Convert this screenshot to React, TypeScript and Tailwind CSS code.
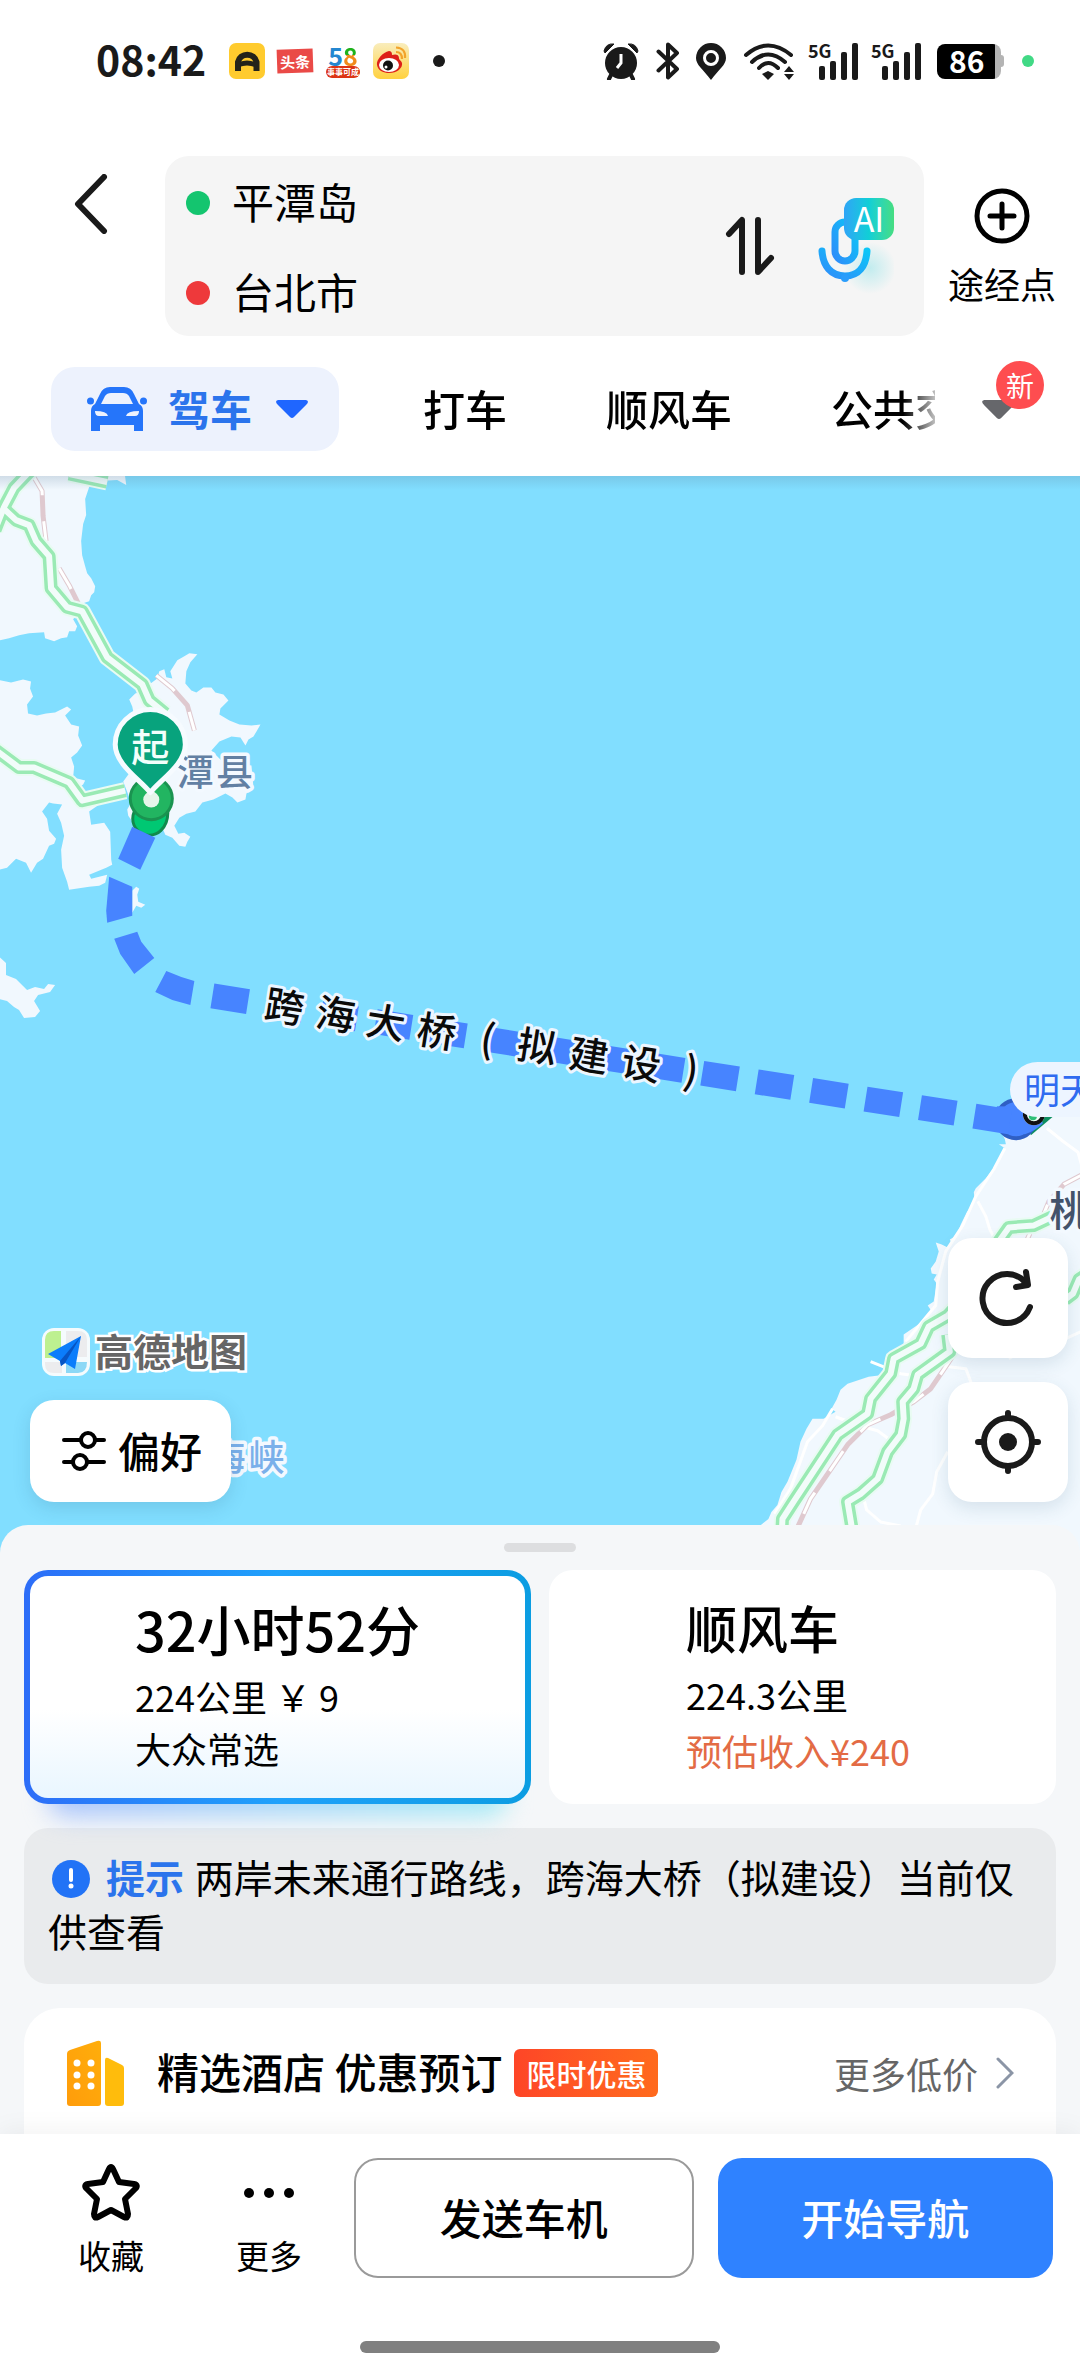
import React from "react";

const LAND = "#f1f8fe";
const INK = "#1a1a1a";

type Point = [number, number];

const roads: string[] = [
  "32,470 15,488 5,507 -4,530",
  "3,507 17,520 30,525 37,541 50,556 52,588 68,607 83,611 108,657 143,684 150,700 166,713",
  "-4,749 20,767 35,767 70,782 83,800 126,790",
  "70,474 108,482",
  "1068,1211 1050,1216 1033,1224 1008,1226 998,1240 990,1262 960,1300 947,1314 928,1325 920,1342 893,1357 890,1372 870,1397 867,1412 837,1433 793,1500 782,1517 780,1560",
  "947,1333 949,1350 917,1373 913,1387 902,1400 903,1417 900,1433 887,1450 877,1477 860,1492 847,1500 852,1530 852,1560",
  "1064,1298 1072,1292 1078,1278 1090,1270",
];

const rails: string[] = [
  "33,474 43,491 44,516 47,541",
  "60,568 70,585 79,603",
  "157,675 173,688 188,705 195,730",
  "1084,1172 1063,1183 1048,1200 1043,1212",
  "1029,1232 1020,1252",
  "953,1353 945,1365 930,1387 913,1400 890,1413 867,1423 847,1443 810,1497 795,1530",
];

const lanes: string[] = [
  "1004,1147 993,1168 975,1195 962,1224 945,1250 937,1280 935,1304 905,1340",
  "1046,1127 1062,1140 1077,1151 1084,1176",
  "977,1200 985,1215 989,1228 995,1240",
  "870,1360 900,1372 915,1374 940,1366",
  "832,1407 822,1424 807,1440 790,1487 774,1512",
  "835,1415 862,1425 877,1429 892,1440 895,1450",
  "947,1450 936,1470 932,1492 920,1508 914,1530",
  "862,1492 866,1508 880,1520 900,1524",
  "940,1364 965,1367 970,1380 969,1395",
  "1008,1357 1040,1336 1058,1340 1080,1330",
];

const land: string[] = [
  "-4,470 125,470 127,485 118,480 100,481 91,484 86,499 87,515 84,524 82,541 83,555 86,566 88,573 92,578 96,586 95,592 92,595 90,601 84,603 80,612 74,619 78,626 76,631 70,631 68,637 62,638 55,641 46,638 45,632 30,633 20,635 10,638 -4,641",
  "-4,679 12,682 24,679 32,681 31,688 34,696 28,704 29,713 38,715 47,713 56,712 68,706 72,709 66,715 72,724 80,726 79,735 83,745 78,752 72,757 75,766 74,777 86,780 84,784 78,788 83,799 100,804 90,811 92,824 105,822 111,831 112,859 113,864 107,867 90,874 92,878 108,874 106,882 100,885 90,886 70,889 68,881 63,867 62,849 65,835 62,822 58,813 63,804 54,803 50,802 43,811 48,818 50,830 57,838 55,843 50,845 44,858 38,862 32,872 27,862 17,858 8,867 -4,870",
  "-4,952 7,962 7,974 17,978 28,989 36,986 45,988 49,983 56,984 51,991 39,994 35,1000 41,1010 36,1016 25,1017 20,1009 15,1006 8,1000 -4,997",
  "150,684 158,678 160,671 165,669 167,677 173,678 171,671 178,660 185,656 190,653 198,654 191,662 187,671 186,683 192,690 197,692 204,687 212,687 216,692 224,694 229,700 221,708 220,714 230,720 240,724 252,725 261,724 257,731 254,736 249,739 246,745 241,737 232,736 220,741 212,750 222,760 252,765 254,787 247,793 246,799 238,802 233,797 226,793 214,799 203,802 196,811 187,813 180,817 175,825 179,833 185,832 191,836 188,841 186,846 180,845 173,837 166,834 160,820 134,822 129,815 128,809 132,802 124,781 135,766 140,740 133,706 130,699 136,693 143,691",
  "133,890 137,886 140,888 138,894 139,901 146,904 142,907 137,905 133,912",
  "1000,1130 1004,1138 1005,1143 998,1143 1004,1147 993,1167 985,1177 975,1187 973,1191 974,1200 966,1211 960,1223 956,1234 949,1238 951,1242 947,1246 941,1243 935,1241 938,1250 935,1260 930,1267 931,1272 936,1273 933,1278 936,1282 933,1300 927,1304 931,1310 922,1320 903,1333 903,1342 890,1353 884,1373 868,1375 847,1382 840,1388 836,1398 831,1407 835,1410 823,1417 812,1417 806,1427 800,1440 796,1458 787,1480 781,1490 777,1503 771,1510 768,1517 758,1525 740,1560 1090,1560 1090,1100",
];

const bridgeLabel: { ch: string; x: number; y: number }[] = [
  { ch: "跨", x: 285, y: 1006 },
  { ch: "海", x: 336, y: 1014 },
  { ch: "大", x: 386, y: 1022 },
  { ch: "桥", x: 437, y: 1031 },
  { ch: "(", x: 488, y: 1038 },
  { ch: "拟", x: 537, y: 1046 },
  { ch: "建", x: 589, y: 1055 },
  { ch: "设", x: 641, y: 1063 },
  { ch: ")", x: 691, y: 1070 },
];

const dashes: Point[][] = [
  [[133, 826], [156, 837], [141, 869], [119, 858]],
  [[110, 876], [133, 886], [133, 915], [108, 922], [107, 910]],
  [[115, 938], [138, 931], [142, 941], [155, 957], [135, 973], [121, 953]],
  [[167, 970], [182, 976], [195, 980], [191, 1004], [173, 999], [156, 991]],
];

function MapCanvas() {
  return (
    <svg
      className="absolute inset-0 h-full w-full"
      viewBox="0 476 1080 1075"
      preserveAspectRatio="xMidYMin slice"
      role="img"
      aria-label="平潭岛到台北市路线地图"
    >
      <defs>
        <linearGradient id="edge" x1="0" y1="0" x2="0" y2="1">
          <stop offset="0" stopColor="#5b7c99" stopOpacity="0.22" />
          <stop offset="1" stopColor="#5b7c99" stopOpacity="0" />
        </linearGradient>
      </defs>
      <rect x="0" y="476" width="1080" height="1100" fill="#81deff" />
      {land.map((p) => (
        <polygon key={p} points={p} fill={LAND} />
      ))}
      <g fill="none" strokeLinejoin="round">
        {lanes.map((p) => (
          <polyline key={p} points={p} stroke="#ffffff" strokeWidth="3" />
        ))}
        {rails.map((p) => (
          <g key={p}>
            <polyline points={p} stroke="#dfc9cf" strokeWidth="5" />
            <polyline points={p} stroke="#ffffff" strokeWidth="3" strokeDasharray="24 26" />
          </g>
        ))}
        {roads.map((p) => (
          <polyline key={p} points={p} stroke="#e9fbf3" strokeWidth="17" />
        ))}
        {roads.map((p) => (
          <polyline key={p} points={p} stroke="#9aeab4" strokeWidth="13" />
        ))}
        {roads.map((p) => (
          <polyline key={p} points={p} stroke="#f2fcfa" strokeWidth="6" />
        ))}
      </g>

      <g className="font-medium" stroke="#f3f9ff" strokeWidth="7" strokeLinejoin="round" paintOrder="stroke" textAnchor="middle">
        <text x="196" y="785" fontSize="37" fill="#6280a3">潭</text>
        <text x="235" y="785" fontSize="37" fill="#6280a3">县</text>
        <text x="228" y="1469" fontSize="36" fill="#7ab0ea">海</text>
        <text x="267" y="1469" fontSize="36" fill="#7ab0ea">峡</text>
        <text x="1069" y="1225" fontSize="41" fill="#43536b">桃</text>
      </g>

      <path d="M152 802V812Q152 816 150 818" stroke="#118a4c" strokeWidth="36" strokeLinecap="round" fill="none" />
      <path d="M152 802V812Q152 816 150 818" stroke="#00c873" strokeWidth="30" strokeLinecap="round" fill="none" />
      <g fill="#4784ff">
        {dashes.map((d) => (
          <polygon key={d.join(" ")} points={d.map((q) => q.join(",")).join(" ")} />
        ))}
      </g>
      <circle cx="152" cy="798" r="21" fill="#22b561" stroke="#1a9350" strokeWidth="3" />
      <circle cx="152" cy="799" r="8" fill="#e6f5ea" />
      <path
        d="M151 792C142 780 116 764 116 744a35 35 0 0 1 70 0C186 764 160 780 151 792Z"
        fill="#08a37d"
        stroke="#f6fbff"
        strokeWidth="5"
        strokeLinejoin="round"
      />
      <text x="151" y="760" fontSize="38" className="font-medium" fill="#f2fffb" textAnchor="middle">起</text>

      <polygon points="1020,1108 1056,1112 1030,1134" fill="#0d8f60" />
      <circle cx="1015" cy="1118" r="19" fill="#4784ff" stroke="#2f5fc4" strokeWidth="4" />
      <path d="M996 1105L1034 1106 1042 1122Q1034 1130 1024 1133L996 1129Z" fill="#4784ff" />
      <line x1="213" y1="995" x2="1018" y2="1122" stroke="#4784ff" strokeWidth="25" strokeDasharray="36 19" />
      <circle cx="1033" cy="1113" r="11" fill="#f0fff6" />
      <circle cx="1033" cy="1113" r="9" fill="#f0fff6" stroke="#111111" strokeWidth="4" />
      <circle cx="1032" cy="1115" r="4" fill="#2fbf78" />

      <g className="font-medium" fontSize="39" fill="#0a0a0a" stroke="#ecf6ff" strokeWidth="6" strokeLinejoin="round" paintOrder="stroke" textAnchor="middle">
        {bridgeLabel.map((c) => (
          <text key={c.ch} x={c.x} y={c.y + 14} transform={`rotate(9 ${c.x} ${c.y})`}>
            {c.ch}
          </text>
        ))}
      </g>
      <rect x="0" y="476" width="1080" height="14" fill="url(#edge)" />
    </svg>
  );
}

function StatusBar() {
  return (
    <div className="flex h-[122px] items-center pr-[46px] pl-[96px] text-[#1a1a1a]">
      <span className="w-[109px] pb-1.5 text-[41px] leading-none font-bold">08:42</span>
      <div className="ml-[24px] flex items-center gap-3">
        <svg className="size-9" viewBox="0 0 36 36" aria-hidden="true">
          <rect width="36" height="36" rx="7" fill="#ffcb2e" />
          <path d="M9 28V19A9.500 9.500 0 0 1 27.500 19V28" fill="none" stroke="#24231a" strokeWidth="6" />
          <path d="M10 19Q18 16 26 19V24Q18 21 10 24Z" fill="#24231a" />
        </svg>
        <span className="flex h-6 w-9 -rotate-2 items-center justify-center bg-[#ea4a47] text-[15px] leading-none font-bold text-white">头条</span>
        <span className="flex w-9 flex-col items-center">
          <span className="flex text-[25px] leading-[22px] font-bold">
            <span className="text-[#2487d0]">5</span>
            <span className="bg-linear-to-b from-[#1eb21c] from-50% to-[#f18b1b] to-50% bg-clip-text text-transparent">8</span>
          </span>
          <span className="rounded-full bg-[#dc3414] px-px text-[8px] leading-3 font-bold text-white">事事可成</span>
        </span>
        <svg className="size-9" viewBox="0 0 36 36" aria-hidden="true">
          <defs>
            <linearGradient id="wb" x1="0" y1="0" x2="0" y2="1">
              <stop offset="0" stopColor="#f9edbd" />
              <stop offset="1" stopColor="#ffd13f" />
            </linearGradient>
          </defs>
          <rect width="36" height="36" rx="7" fill="url(#wb)" />
          <path d="M16 8C10 9 3 17 4 22C5 28 11 30 16 30C24 30 30 25 29 20C28 17 26 17 26 15C26 11 22 11 19 12C19 9 18 8 16 8Z" fill="#dd2019" />
          <ellipse cx="16" cy="22" rx="10" ry="7" fill="#ffffff" />
          <circle cx="15" cy="22.500" r="5" fill="#111111" />
          <circle cx="13" cy="24" r="1.500" fill="#ffffff" />
          <path d="M23 9Q29 9 29 16M23 4.500Q33 5 32 15" fill="none" stroke="#f2a32b" strokeWidth="2.200" />
        </svg>
      </div>
      <span className="ml-6 size-3 rounded-full bg-[#1a1a1a]" />

      <div className="ml-auto flex items-center">
        <svg className="h-[38px] w-[38px]" viewBox="0 0 38 38" fill={INK} aria-hidden="true">
          <circle cx="19" cy="21" r="16" />
          <path d="M2 9Q4 1 12 2L3 11ZM36 9Q34 1 26 2L35 11Z" stroke={INK} strokeLinejoin="round" />
          <path d="M9 33L7 37M29 33L31 37" stroke={INK} strokeWidth="4" strokeLinecap="round" />
          <path d="M19 12V21L15 26" fill="none" stroke="#ffffff" strokeWidth="3" />
        </svg>
        <svg className="ml-4 h-[38px] w-6" viewBox="0 0 24 38" fill="none" stroke={INK} strokeWidth="4" strokeLinejoin="round" strokeLinecap="round" aria-hidden="true">
          <path d="M2.500 9.500L21 27L12 35.500V2.500L21 11L2.500 28.500" />
        </svg>
        <svg className="ml-[15px] h-[38px] w-8" viewBox="0 0 32 38" aria-hidden="true">
          <path d="M16 1A15 15 0 0 0 1 16C1 23 8 27 16 38C24 27 31 23 31 16A15 15 0 0 0 16 1Z" fill={INK} />
          <circle cx="16" cy="16" r="6.500" fill={INK} stroke="#ffffff" strokeWidth="3" />
        </svg>
        <svg className="ml-4 h-[38px] w-[52px]" viewBox="0 0 52 38" fill="none" stroke={INK} strokeWidth="4" strokeLinecap="round" aria-hidden="true">
          <path d="M3 13Q25 -6 48 13M9 20Q25 5 42 20M16 26Q25 16 35 26" />
          <path d="M25 29L31 32L25 38L19 32Z" fill={INK} stroke="none" />
          <path d="M41 30L46 24L51 30ZM41 32L46 38L51 32Z" fill={INK} stroke="none" />
        </svg>
        {[0, 1].map((n) => (
          <div key={n} className="relative ml-3 flex h-[38px] w-[51px] items-end justify-end gap-[5px]">
            <span className="absolute top-0 left-px text-[18px] leading-4 font-bold">5G</span>
            <span className="h-[14px] w-[6px] rounded-xs bg-[#1a1a1a]" />
            <span className="h-[19px] w-[6px] rounded-xs bg-[#1a1a1a]" />
            <span className="h-7 w-[6px] rounded-xs bg-[#1a1a1a]" />
            <span className="h-[37px] w-[6px] rounded-xs bg-[#1a1a1a]" />
          </div>
        ))}
        <span className="ml-4 flex h-[35px] w-16 items-center rounded-lg bg-linear-to-r from-black from-90% to-[#b4b4b4] to-90% pb-[2px] pl-3 text-[30px] leading-none font-bold text-white">
          86
        </span>
        <span className="h-3 w-[3px] rounded-r-full bg-[#b4b4b4]" />
        <span className="ml-[18px] size-3 rounded-full bg-[#41d985]" />
      </div>
    </div>
  );
}

function SearchRow() {
  return (
    <div className="mt-[34px] flex">
      <button aria-label="返回" className="flex w-[165px] items-start self-start pt-[18px] pl-[74px]">
        <svg className="h-[60px] w-[34px]" viewBox="0 0 34 60" fill="none" stroke={INK} strokeWidth="6" strokeLinecap="round" strokeLinejoin="round">
          <path d="M30 3L4 30L30 57" />
        </svg>
      </button>
      <div className="flex min-w-0 flex-1 items-center rounded-3xl bg-[#f5f5f5] pr-[30px] pl-[21px]">
        <div className="min-w-0 flex-1">
          <label className="flex h-[90px] items-center gap-[22px] pt-1">
            <span className="size-6 rounded-full bg-[#14c56f]" />
            <input aria-label="起点" defaultValue="平潭岛" className="min-w-0 flex-1 bg-transparent pb-1 text-[42px] leading-[60px] text-black outline-none" />
          </label>
          <label className="flex h-[90px] items-center gap-[22px] pt-1">
            <span className="size-6 rounded-full bg-[#ee393b]" />
            <input aria-label="终点" defaultValue="台北市" className="min-w-0 flex-1 bg-transparent pb-1 text-[42px] leading-[60px] text-black outline-none" />
          </label>
        </div>
        <button aria-label="交换起终点">
          <svg className="h-[60px] w-[50px]" viewBox="0 0 50 60" fill="none" stroke={INK} strokeWidth="6" strokeLinecap="round" strokeLinejoin="round">
            <path d="M4 18L17 4V56M33 4V56L46 42" />
          </svg>
        </button>
        <button aria-label="AI 语音" className="relative ml-[43px] h-[96px] w-[76px]">
          <svg className="h-[96px] w-[76px]" viewBox="0 0 76 96" fill="none" aria-hidden="true">
            <defs>
              <linearGradient id="mic" x1="0" y1="1" x2="1" y2="0">
                <stop offset="0" stopColor="#2f8dfa" />
                <stop offset="1" stopColor="#0cc6f7" />
              </linearGradient>
              <radialGradient id="glow">
                <stop offset="0" stopColor="#9fe6ea" stopOpacity="0.6" />
                <stop offset="1" stopColor="#9fe6ea" stopOpacity="0" />
              </radialGradient>
            </defs>
            <circle cx="52" cy="70" r="26" fill="url(#glow)" />
            <rect x="17" y="24" width="20" height="39" rx="10" stroke="url(#mic)" strokeWidth="7" />
            <path d="M4 53C5 68 13 78 27 78S48 68 49 53" stroke="url(#mic)" strokeWidth="7" strokeLinecap="round" />
            <circle cx="27" cy="80" r="4" fill="#2b9dfb" />
          </svg>
          <span className="absolute top-0 right-0 flex h-[42px] w-[50px] items-center justify-center rounded-xl bg-linear-to-r from-[#2fa4f6] via-[#10cfd6] to-[#46dd80] pb-0.5 text-[34px] leading-none text-white">
            AI
          </span>
        </button>
      </div>
      <button className="flex w-[156px] flex-col items-center justify-center gap-5 pb-0.5">
        <svg className="size-14" viewBox="0 0 56 56" fill="none" stroke="#000000" strokeWidth="5" strokeLinecap="round" aria-hidden="true">
          <circle cx="28" cy="28" r="25" />
          <path d="M28 16V40M16 28H40" />
        </svg>
        <span className="text-[36px] leading-[38px] text-black">途经点</span>
      </button>
    </div>
  );
}

function ModeTabs() {
  return (
    <nav className="mt-[31px] flex items-center pb-[25px] pl-[51px] text-[42px] leading-none font-medium text-black">
      <button className="flex h-[84px] w-[288px] shrink-0 items-center rounded-3xl bg-[#edf2fd] pl-9 text-[#2b74ec]">
        <svg className="h-[44px] w-[60px]" viewBox="0 0 60 44" fill="#2575fa" aria-hidden="true">
          <path
            fillRule="evenodd"
            d="M4 44V24Q4 19 8 17L13 7Q16 0 23 0H37Q44 0 47 7L52 17Q56 19 56 24V44H47V38H13V44ZM14 17H46L42 9Q40 6 36 6H24Q20 6 18 9ZM8 24Q8 29 12 29H21Q20 24 8 24ZM52 24Q52 29 48 29H39Q40 24 52 24Z"
          />
          <circle cx="3.500" cy="14" r="3.500" />
          <circle cx="56.500" cy="14" r="3.500" />
        </svg>
        <span className="ml-[21px] pb-0.5 font-bold">驾车</span>
        <svg className="ml-6 h-[18px] w-8" viewBox="0 0 32 18" fill="#1f66ff" aria-hidden="true">
          <path d="M2 0H30Q34 1 30 5L18 17Q16 19 14 17L2 5Q-2 1 2 0Z" />
        </svg>
      </button>
      <div className="ml-[84px] flex h-[84px] min-w-0 flex-1 items-center gap-[99px] overflow-hidden pb-0.5 leading-[60px] [mask-image:linear-gradient(to_right,black_calc(100%-32px),rgb(0_0_0/0.25))]">
        <button className="shrink-0">打车</button>
        <button className="shrink-0">顺风车</button>
        <button className="shrink-0">公共交通</button>
      </div>
      <button aria-label="更多出行方式" className="relative flex h-[84px] w-[145px] shrink-0 items-center justify-center pr-[18px]">
        <svg className="h-[19px] w-[34px]" viewBox="0 0 32 18" fill="#66676b" aria-hidden="true">
          <path d="M2 0H30Q34 1 30 5L18 17Q16 19 14 17L2 5Q-2 1 2 0Z" />
        </svg>
        <span className="absolute -top-[6px] right-9 flex size-12 items-center justify-center rounded-full bg-[#fe4d50] text-[28px] leading-none font-normal text-white">新</span>
      </button>
    </nav>
  );
}

function MapSection() {
  return (
    <section className="relative flex min-h-[1075px] flex-1 items-end overflow-hidden bg-[#81deff]">
      <MapCanvas />
      <span className="absolute top-[586px] left-[1010px] flex h-[55px] items-center rounded-l-full bg-[#edf5ff] pb-1 pl-[14px] text-[36px] leading-none whitespace-nowrap text-[#2f6bf0]">
        明天
      </span>
      <div className="relative flex w-full items-end justify-between pr-3 pb-[51px] pl-[30px]">
        <div className="flex flex-col items-start gap-6">
          <div className="ml-3 flex items-center gap-[5px]">
            <svg className="size-12" viewBox="0 0 48 48" aria-hidden="true">
              <rect width="48" height="48" rx="12" fill="#f5fbfd" />
              <path d="M3 30V12Q3 3 12 3H19V30Z" fill="#bdf090" />
              <path d="M24 3H36Q45 3 45 12V29H24Z" fill="#ececee" />
              <path d="M24 34H45Q45 45 36 45H24Z" fill="#8cd8f6" />
              <path d="M3 34H20V45H12Q3 45 3 36Z" fill="#ececee" />
              <path d="M39 8L6 26L18 33L19 38L23 35L33 41Z" fill="#0b7dfb" />
              <path d="M39 8L18 33L19 38L23 35Z" fill="#0755c4" />
            </svg>
            <span className="pb-1 text-[38px] leading-[44px] font-bold text-[#666666] [paint-order:stroke] [-webkit-text-stroke:5px_#ffffff]">高德地图</span>
          </div>
          <button className="flex h-[102px] items-center gap-3 rounded-3xl bg-white pr-[29px] pl-8 text-[42px] leading-none font-medium text-black shadow-[0_6px_18px_rgba(40,90,120,0.16)]">
            <svg className="h-10 w-11" viewBox="0 0 44 40" fill="none" stroke="#000000" strokeWidth="4" strokeLinecap="round" aria-hidden="true">
              <path d="M2 9H18M34 9H42M2 31H10M26 31H42" />
              <circle cx="26" cy="9" r="7" />
              <circle cx="18" cy="31" r="7" />
            </svg>
            <span className="pb-0.5">偏好</span>
          </button>
        </div>
        <div className="flex flex-col gap-6">
          <button aria-label="刷新路线" className="flex size-[120px] items-center justify-center rounded-3xl bg-white shadow-[0_6px_18px_rgba(40,90,120,0.14)]">
            <svg className="size-[60px]" viewBox="0 0 60 60" fill="none" stroke={INK} strokeWidth="6" strokeLinecap="round" strokeLinejoin="round" aria-hidden="true">
              <path d="M52 39A24.500 24.500 0 1 1 48 15" />
              <path d="M48 4L50 17L38 19" />
            </svg>
          </button>
          <button aria-label="定位" className="flex size-[120px] items-center justify-center rounded-3xl bg-white shadow-[0_6px_18px_rgba(40,90,120,0.14)]">
            <svg className="size-[66px]" viewBox="0 0 66 66" fill="none" stroke={INK} strokeWidth="6" strokeLinecap="round" aria-hidden="true">
              <circle cx="33" cy="33" r="24" />
              <path d="M33 4V9M33 57V62M3 33H9M57 33H63" />
              <circle cx="33" cy="33" r="9" fill={INK} stroke="none" />
            </svg>
          </button>
        </div>
      </div>
    </section>
  );
}

function RouteCards() {
  return (
    <div className="grid grid-cols-2 gap-[18px] text-left text-[36px] leading-[52px] text-black">
      <div className="relative">
        <div className="absolute inset-x-6 -bottom-3 h-10 rounded-full bg-linear-to-r from-[#a9c2fb] to-[#a5ebf5] blur-md" />
        <button className="relative block h-full w-full rounded-3xl bg-linear-to-r from-[#2d6df8] via-[#1fa1fb] to-[#0b9de2] p-[6px] text-left">
          <span className="block h-full rounded-[18px] bg-linear-to-b from-white from-60% to-[#e9f6ff] pt-4 pb-[22px] pl-[105px]">
            <span className="block pb-1 text-[54px] leading-[74px] font-medium">32小时52分</span>
            <span className="block">224公里 ￥ 9</span>
            <span className="block">大众常选</span>
          </span>
        </button>
      </div>
      <button className="block rounded-3xl bg-white pt-5 pb-7 pl-[137px] text-left">
        <span className="block pb-1 text-[51px] leading-[74px] font-medium">顺风车</span>
        <span className="block">224.3公里</span>
        <span className="block pt-1 text-[#e36b45]">预估收入¥240</span>
      </button>
    </div>
  );
}

function Sheet() {
  return (
    <section className="relative -mt-7 rounded-t-[28px] bg-[#f5f7f9] px-6 pt-[18px]">
      <div className="mx-auto mb-[18px] h-[9px] w-[72px] rounded-full bg-[#dddee0]" />
      <RouteCards />
      <p className="mt-6 rounded-3xl bg-[#e9ebed] px-6 pt-[21px] pb-[27px] text-[39px] leading-[54px] text-black">
        <svg className="mr-4 ml-[3px] inline-block size-[39px] align-[-5px]" viewBox="0 0 39 39" aria-hidden="true">
          <circle cx="20" cy="20" r="19" fill="#2273f6" />
          <path d="M20 11V21" stroke="#ffffff" strokeWidth="4" strokeLinecap="round" />
          <circle cx="20" cy="27" r="2.500" fill="#ffffff" />
        </svg>
        <strong className="mr-0.5 font-bold text-[#2b74ec]">提示</strong> 两岸未来通行路线，跨海大桥（拟建设）当前仅供查看
      </p>
      <div className="mt-6 flex items-center rounded-t-[36px] bg-white pt-8 pr-[42px] pb-7 pl-[42px]">
        <svg className="h-[66px] w-[60px]" viewBox="0 0 60 66" aria-hidden="true">
          <defs>
            <linearGradient id="tower" x1="0" y1="1" x2="1" y2="0">
              <stop offset="0" stopColor="#ff9c0b" />
              <stop offset="1" stopColor="#ffae0b" />
            </linearGradient>
          </defs>
          <path d="M1 14Q1 11 4 10L31 1Q35 0 35 3V63Q35 66 32 66H4Q1 66 1 63Z" fill="url(#tower)" />
          <path d="M39 20Q39 17 42 18L56 25Q58 26 58 28V63Q58 66 55 66H42Q39 66 39 63Z" fill="#ffbc0c" />
          <g fill="#ffffff">
            {[23, 35, 46].map((y) => (
              <g key={y}>
                <circle cx="11" cy={y} r="3.500" />
                <circle cx="25" cy={y} r="3.500" />
              </g>
            ))}
          </g>
        </svg>
        <h2 className="ml-[31px] pb-1 text-[42px] leading-[56px] font-medium whitespace-nowrap text-black">精选酒店 优惠预订</h2>
        <span className="ml-3 flex h-12 w-36 shrink-0 items-center justify-center rounded-md bg-linear-to-r from-[#fe4527] to-[#ff6a1c] text-[30px] leading-none font-medium text-white">限时优惠</span>
        <a href="#hotels" className="ml-auto flex items-center gap-[18px] text-[36px] leading-[60px] whitespace-nowrap text-[#666666]">
          更多低价
          <svg className="h-[32px] w-[18px]" viewBox="0 0 18 32" fill="none" stroke="#8b95a6" strokeWidth="3" strokeLinecap="round" aria-hidden="true">
            <path d="M2 2L16 16L2 30" />
          </svg>
        </a>
      </div>
    </section>
  );
}

function BottomBar() {
  return (
    <footer className="relative bg-white pt-6 pb-[21px] shadow-[0_-4px_24px_rgba(0,0,0,0.05)]">
      <div className="flex items-stretch pr-[27px] pl-[32px] text-black">
        <button className="flex w-[158px] flex-col items-center gap-2.5 pt-1">
          <svg className="size-[60px]" viewBox="0 0 60 60" fill="none" stroke="#000000" strokeWidth="6" strokeLinejoin="round" aria-hidden="true">
            <path d="M28 7Q30 3 32 7L38 20L53 22Q58 23 54 27L44 37L47 52Q47 57 43 55L30 48L17 55Q13 57 13 52L16 37L6 27Q2 23 7 22L22 20Z" />
          </svg>
          <span className="text-[33px] leading-[46px]">收藏</span>
        </button>
        <button className="flex w-[158px] flex-col items-center gap-2.5 pt-1">
          <svg className="size-[60px]" viewBox="0 0 60 60" fill="#000000" aria-hidden="true">
            <circle cx="10" cy="31" r="5" />
            <circle cx="30" cy="31" r="5" />
            <circle cx="50" cy="31" r="5" />
          </svg>
          <span className="text-[33px] leading-[46px]">更多</span>
        </button>
        <button className="ml-[6px] h-[120px] flex-1 rounded-3xl border-2 border-[#9a9a9a] bg-white pb-0.5 text-[42px] leading-none font-medium">发送车机</button>
        <button className="ml-6 h-[120px] flex-1 rounded-3xl bg-[#2f82ff] pb-0.5 text-[42px] leading-none font-medium text-white">开始导航</button>
      </div>
      <div className="mx-auto mt-[63px] h-3 w-1/3 rounded-full bg-[#808080]" />
    </footer>
  );
}

export default function App() {
  return (
    <main className="flex min-h-screen flex-col overflow-hidden bg-white font-['Noto_Sans_CJK_SC','Noto_Sans',sans-serif]">
      <header>
        <StatusBar />
        <SearchRow />
        <ModeTabs />
      </header>
      <MapSection />
      <Sheet />
      <BottomBar />
    </main>
  );
}
